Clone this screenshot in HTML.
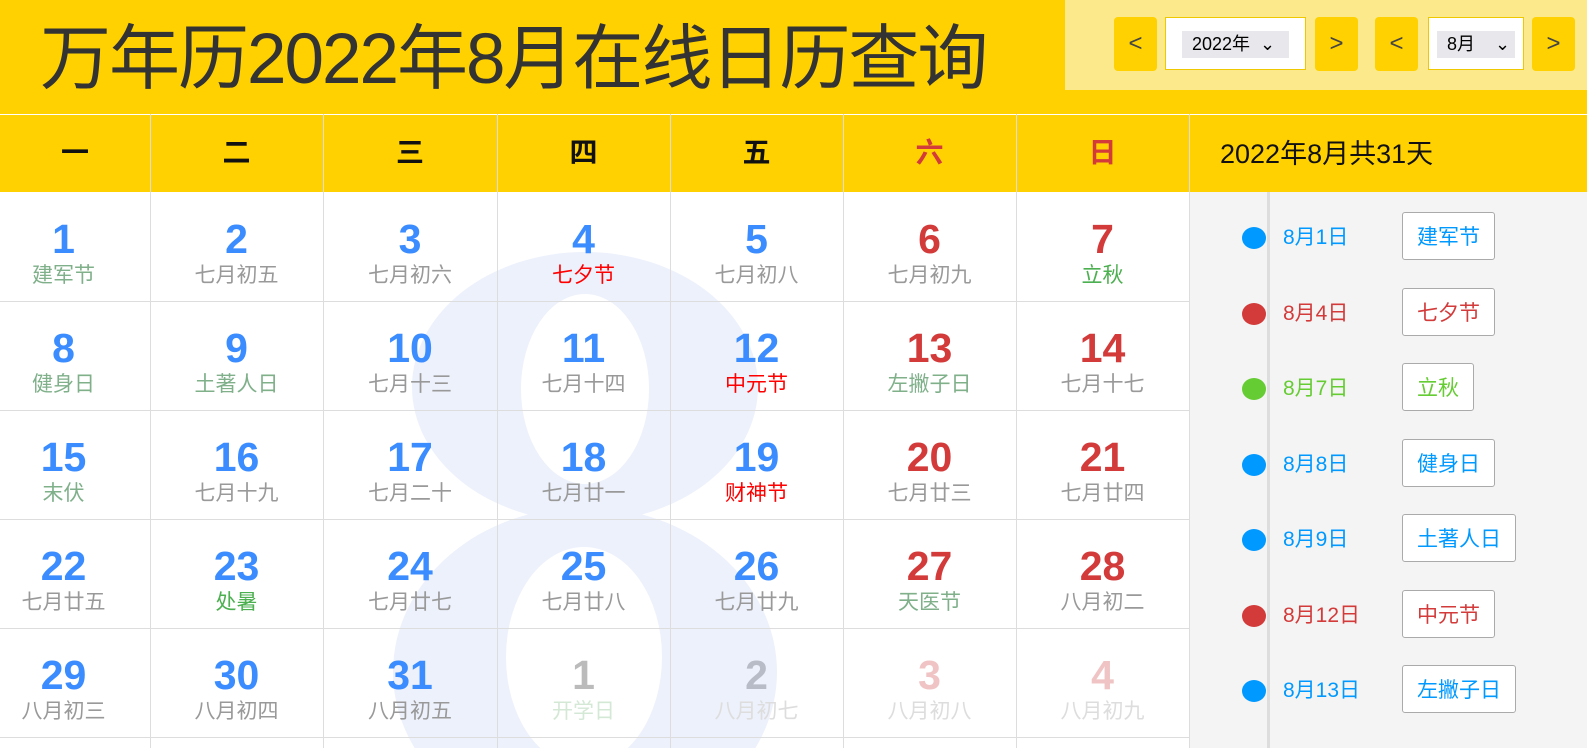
<!DOCTYPE html>
<html><head><meta charset="utf-8"><style>
*{margin:0;padding:0;box-sizing:border-box}
html,body{width:1587px;height:748px;overflow:hidden}
body{background:#fff;font-family:"Liberation Sans","Noto Sans CJK SC",sans-serif;position:relative}
.top{position:absolute;left:0;top:0;width:1587px;height:114px;background:#ffd100}
.title{position:absolute;left:40px;top:10px;font-size:71px;line-height:100px;color:#333;letter-spacing:-2px;white-space:nowrap}
.ctrl{position:absolute;left:1065px;top:0;width:522px;height:90px;background:#fbe98c}
.btn{position:absolute;top:17px;width:43px;height:54px;background:#ffd100;border-radius:4px;font-size:24px;color:#444;text-align:center;line-height:54px}
.sel{position:absolute;top:17px;height:53px;background:#fff;border:1px solid #f0c800;overflow:hidden}
.sel span{position:absolute;top:13px;height:27px;background:#e8e8ec;font-size:18px;line-height:27px;padding-left:10px;color:#000;white-space:nowrap}
.hdr{position:absolute;top:114px;height:78px;background:#ffd100;border-top:1px solid #fff}
.hc{position:absolute;top:114px;height:78px;line-height:78px;text-align:center;font-size:28px;font-weight:bold;color:#111}
.vl{position:absolute;top:114px;width:1px;height:634px;background:#ddd}
.hl{position:absolute;left:0;width:1189px;height:1px;background:#ddd}
.cell{position:absolute;height:109px;text-align:center;overflow:hidden}
.n{font-size:41px;font-weight:bold;color:#3a8cff;line-height:40px;margin-top:24px}
.l{font-size:21px;color:#999;line-height:26px;margin-top:4px}
.side{position:absolute;left:1190px;top:192px;width:397px;height:556px;background:#f4f4f4}
.dot{position:absolute;left:1242px;width:24px;height:22px;border-radius:50%}
.dt{position:absolute;left:1283px;font-size:21px;line-height:28px}
.tag{position:absolute;left:1402px;height:48px;border:1px solid #aaa;border-radius:3px;background:#fff;font-size:21px;display:flex;align-items:center;padding:0 14px}
</style></head><body>
<div class="top"></div>
<div class="title">万年历2022年8月在线日历查询</div>
<div class="ctrl"></div>
<div class="btn" style="left:1114px">&lt;</div>
<div class="sel" style="left:1165px;width:141px"><span style="left:16px;width:107px">2022年 &nbsp;⌄</span></div>
<div class="btn" style="left:1315px">&gt;</div>
<div class="btn" style="left:1375px">&lt;</div>
<div class="sel" style="left:1428px;width:96px"><span style="left:8px;width:78px">8月 &nbsp;&nbsp;&nbsp;⌄</span></div>
<div class="btn" style="left:1532px">&gt;</div>
<div class="hdr" style="left:0;width:1587px"></div>
<svg style="position:absolute;left:0;top:192px" width="1189" height="556">
<ellipse cx="585" cy="195" rx="173" ry="135" fill="#edf1fb"/>
<ellipse cx="585" cy="480" rx="192" ry="165" fill="#edf1fb"/>
<ellipse cx="585" cy="197" rx="64" ry="95" fill="#fff"/>
<ellipse cx="584" cy="465" rx="78" ry="110" fill="#fff"/>
</svg>
<div class="side"></div>
<div style="position:absolute;left:1267px;top:192px;width:3px;height:556px;background:#ddd"></div>
<div style="position:absolute;left:1220px;top:134px;font-size:27px;line-height:40px;color:#111">2022年8月共31天</div>
<div id="g"></div>
<script>
var xs=[0,150,323,497,670,843,1016,1189];
var wd=["一","二","三","四","五","六","日"];
var h="";
for(var i=0;i<7;i++){var c=i>=5?"#d33a3a":"#111";h+='<div class="hc" style="left:'+xs[i]+'px;width:'+(xs[i+1]-xs[i])+'px;color:'+c+'">'+wd[i]+'</div>';}
for(var i=1;i<8;i++)h+='<div class="vl" style="left:'+xs[i]+'px"></div>';
var ys=[192,301,410,519,628,737];
for(var r=1;r<6;r++)h+='<div class="hl" style="top:'+ys[r]+'px"></div>';
var G="#7fb08a",S="#4caf50",R="#f00",Y="#999";
var d=[
[1,"建军节",G],[2,"七月初五",Y],[3,"七月初六",Y],[4,"七夕节",R],[5,"七月初八",Y],[6,"七月初九",Y],[7,"立秋",S],
[8,"健身日",G],[9,"土著人日",G],[10,"七月十三",Y],[11,"七月十四",Y],[12,"中元节",R],[13,"左撇子日",G],[14,"七月十七",Y],
[15,"末伏",G],[16,"七月十九",Y],[17,"七月二十",Y],[18,"七月廿一",Y],[19,"财神节",R],[20,"七月廿三",Y],[21,"七月廿四",Y],
[22,"七月廿五",Y],[23,"处暑",S],[24,"七月廿七",Y],[25,"七月廿八",Y],[26,"七月廿九",Y],[27,"天医节",G],[28,"八月初二",Y],
[29,"八月初三",Y],[30,"八月初四",Y],[31,"八月初五",Y],[1,"开学日","#d4e8d6"],[2,"八月初七","#ddd"],[3,"八月初八","#ddd"],[4,"八月初九","#ddd"]];
for(var k=0;k<35;k++){var r=Math.floor(k/7),c=k%7;var nc=c>=5?"#d33a3a":"#3a8cff";
if(k==31)nc="#bbb";if(k==32)nc="#b8bcc6";if(k>=33)nc="#f0c4c4";
var x0=c==0?-23:xs[c];var w=xs[c+1]-x0;
h+='<div class="cell" style="left:'+x0+'px;width:'+w+'px;top:'+(ys[r]+3)+'px"><div class="n" style="color:'+nc+'">'+d[k][0]+'</div><div class="l" style="color:'+d[k][2]+'">'+d[k][1]+'</div></div>';}
var B="#0099ff",RD="#d33a3a",GN="#66cc33";
var it=[["8月1日","建军节",B],["8月4日","七夕节",RD],["8月7日","立秋",GN],["8月8日","健身日",B],["8月9日","土著人日",B],["8月12日","中元节",RD],["8月13日","左撇子日",B]];
for(var i=0;i<7;i++){var y=238+i*75.5;
h+='<div class="dot" style="top:'+(y-11)+'px;background:'+it[i][2]+'"></div>';
h+='<div class="dt" style="top:'+(y-14)+'px;color:'+it[i][2]+'">'+it[i][0]+'</div>';
h+='<div class="tag" style="top:'+(y-26)+'px;color:'+it[i][2]+'">'+it[i][1]+'</div>';}
document.getElementById("g").innerHTML=h;
</script>
</body></html>
